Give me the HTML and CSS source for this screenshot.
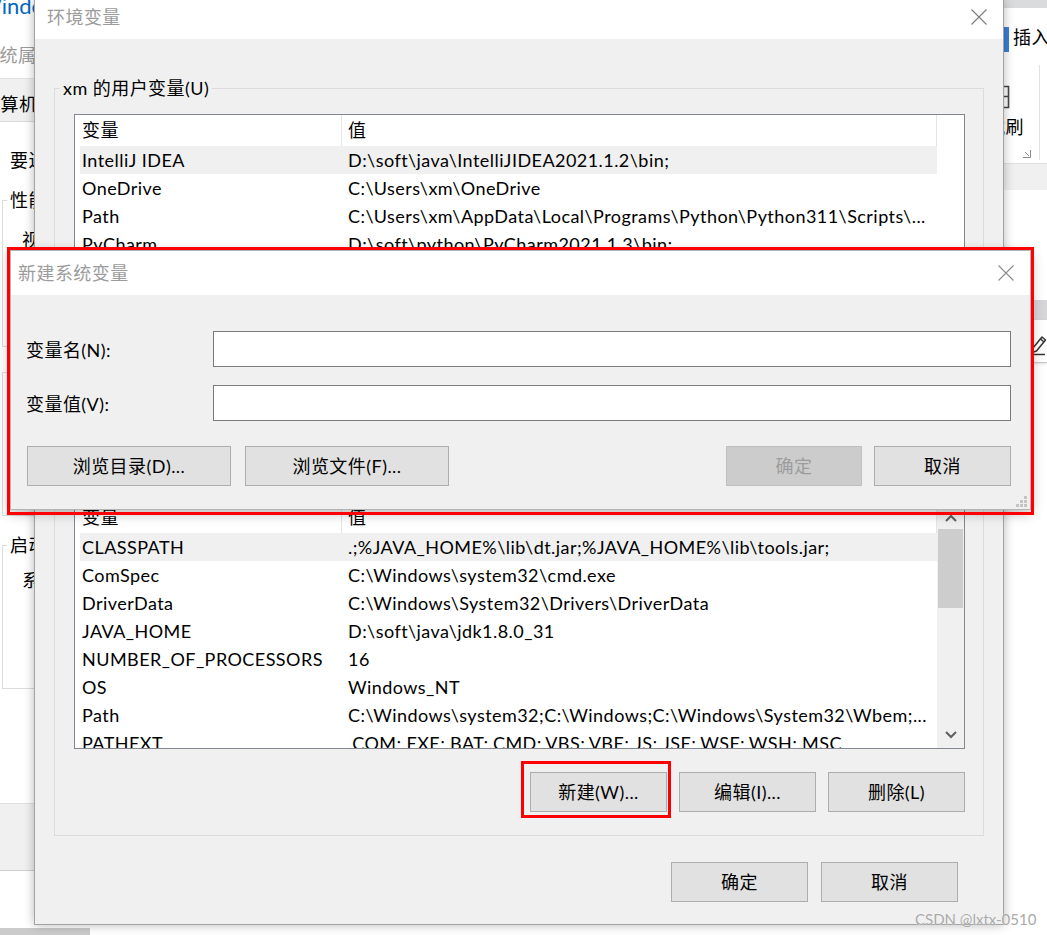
FILE: index.html
```html
<!DOCTYPE html>
<html lang="zh-CN">
<head>
<meta charset="utf-8">
<title>环境变量</title>
<link rel="stylesheet" href="styles.css">
</head>
<body>
<div class="desktop">

  <div class="bgwin-left">
    <div class="bl-app"><span>Windows 设置</span></div>
    <div class="bl-title">系统属性</div>
    <div class="bl-tabs">计算机名</div>
    <div class="bl-note">要进行大多数更改</div>
    <fieldset class="bl-fs bl-perf"><legend>性能</legend><div class="bl-text">视觉效果</div></fieldset>
    <div class="bl-box"></div>
    <fieldset class="bl-fs bl-boot"><legend>启动和故障恢复</legend><div class="bl-text bl-text-boot">系统启动</div></fieldset>
    <div class="bl-footer"></div>
    <div class="bl-taskbar"></div>
  </div>

  <div class="bgwin-right">
    <div class="br-top"></div>
    <div class="br-tabs"><span class="br-tabicon"></span><span class="br-tabtext">插入</span></div>
    <div class="br-ribbon">
      <div class="br-group">
        <svg class="br-brush" width="12" height="24" viewBox="0 0 12 24"><path d="M-4 1.5 H8.5 V11.5 H-4 M-4 11.5 H8.5 V22.5 H-4" fill="none" stroke="#444" stroke-width="1.6"/></svg>
        <div class="br-label">式刷</div>
        <svg class="br-launch" width="8" height="8" viewBox="0 0 8 8"><path d="M7.5 0 V7.5 H0" fill="none" stroke="#8a8a8a" stroke-width="1"/><path d="M2 2 L6 6" stroke="#8a8a8a" stroke-width="1"/></svg>
      </div>
      <div class="br-sep"></div>
    </div>
    <div class="br-band"></div>
    <div class="br-space"></div>
    <div class="br-band2"></div>
    <div class="br-tool">
      <svg class="br-pencil" width="17" height="26" viewBox="0 0 17 26"><path d="M3 18 L12 7 L15.5 10 L6.5 21 L2 22.5 Z" fill="none" stroke="#333" stroke-width="1.5" stroke-linejoin="round"/><path d="M10.5 9 L14 12" stroke="#333" stroke-width="1.5"/><line x1="0" y1="24.5" x2="15" y2="24.5" stroke="#333" stroke-width="1.5"/></svg>
    </div>
  </div>

  <div class="env-dialog">
    <div class="titlebar">
      <span class="title-text">环境变量</span>
      <svg class="close-x" width="16" height="16" viewBox="0 0 16 16"><path d="M0.5 0.5 L15.5 15.5 M15.5 0.5 L0.5 15.5" stroke="#7a7a7a" stroke-width="1.1"/></svg>
    </div>
    <div class="env-body">
      <fieldset class="grp grp-user">
        <legend>xm 的用户变量(U)</legend>
        <div class="grp-inner">
          <div class="list list-user">
            <div class="list-main">
              <div class="list-head"><div class="hc hc1">变量</div><div class="hc hc2">值</div></div>
              <div class="row sel"><div class="c1">IntelliJ IDEA</div><div class="c2">D:\soft\java\IntelliJIDEA2021.1.2\bin;</div></div>
              <div class="row"><div class="c1">OneDrive</div><div class="c2">C:\Users\xm\OneDrive</div></div>
              <div class="row"><div class="c1">Path</div><div class="c2">C:\Users\xm\AppData\Local\Programs\Python\Python311\Scripts\...</div></div>
              <div class="row"><div class="c1">PyCharm</div><div class="c2">D:\soft\python\PyCharm2021.1.3\bin;</div></div>
            </div>
            <div class="list-side"></div>
          </div>
        </div>
      </fieldset>

      <fieldset class="grp grp-sys">
        <legend>系统变量(S)</legend>
        <div class="grp-inner">
          <div class="list list-sys">
            <div class="list-main">
              <div class="list-head"><div class="hc hc1">变量</div><div class="hc hc2">值</div></div>
              <div class="row sel"><div class="c1">CLASSPATH</div><div class="c2">.;%JAVA_HOME%\lib\dt.jar;%JAVA_HOME%\lib\tools.jar;</div></div>
              <div class="row"><div class="c1">ComSpec</div><div class="c2">C:\Windows\system32\cmd.exe</div></div>
              <div class="row"><div class="c1">DriverData</div><div class="c2">C:\Windows\System32\Drivers\DriverData</div></div>
              <div class="row"><div class="c1">JAVA_HOME</div><div class="c2">D:\soft\java\jdk1.8.0_31</div></div>
              <div class="row"><div class="c1">NUMBER_OF_PROCESSORS</div><div class="c2">16</div></div>
              <div class="row"><div class="c1">OS</div><div class="c2">Windows_NT</div></div>
              <div class="row"><div class="c1">Path</div><div class="c2">C:\Windows\system32;C:\Windows;C:\Windows\System32\Wbem;...</div></div>
              <div class="row"><div class="c1">PATHEXT</div><div class="c2">.COM;.EXE;.BAT;.CMD;.VBS;.VBE;.JS;.JSE;.WSF;.WSH;.MSC</div></div>
            </div>
            <div class="vscroll">
              <div class="sb-btn sb-up"><svg width="12" height="8" viewBox="0 0 12 8"><polyline points="1,7 6,2 11,7" fill="none" stroke="#606060" stroke-width="2"/></svg></div>
              <div class="sb-thumb"></div>
              <div class="sb-track"></div>
              <div class="sb-btn sb-down"><svg width="12" height="8" viewBox="0 0 12 8"><polyline points="1,1 6,6 11,1" fill="none" stroke="#606060" stroke-width="2"/></svg></div>
            </div>
          </div>
          <div class="btn-row">
            <button class="btn">新建(W)...</button>
            <button class="btn">编辑(I)...</button>
            <button class="btn">删除(L)</button>
          </div>
        </div>
      </fieldset>

      <div class="btn-row dlg-btns">
        <button class="btn">确定</button>
        <button class="btn">取消</button>
      </div>
    </div>
  </div>

  <div class="nv-dialog">
    <div class="nv-title">
      <span class="title-text">新建系统变量</span>
      <svg class="close-x" width="16" height="16" viewBox="0 0 16 16"><path d="M0.5 0.5 L15.5 15.5 M15.5 0.5 L0.5 15.5" stroke="#8a8a8a" stroke-width="1.1"/></svg>
    </div>
    <div class="nv-body">
      <div class="nv-field"><span class="nv-label">变量名(N):</span><span class="nv-input"></span></div>
      <div class="nv-field"><span class="nv-label">变量值(V):</span><span class="nv-input"></span></div>
      <div class="nv-btns">
        <button class="btn btn-wide">浏览目录(D)...</button>
        <button class="btn btn-wide">浏览文件(F)...</button>
        <span class="nv-spacer"></span>
        <button class="btn btn-disabled">确定</button>
        <button class="btn">取消</button>
      </div>
      <svg class="nv-grip" width="11" height="11" viewBox="0 0 11 11"><g fill="#c4c4c4"><rect x="8" y="0" width="3" height="3"/><rect x="4" y="4" width="3" height="3"/><rect x="8" y="4" width="3" height="3"/><rect x="0" y="8" width="3" height="3"/><rect x="4" y="8" width="3" height="3"/><rect x="8" y="8" width="3" height="3"/></g></svg>
    </div>
  </div>

  <div class="mark mark-dialog"></div>
  <div class="mark mark-btn"></div>
  <div class="watermark">CSDN @lxtx-0510</div>
</div>
</body>
</html>
```

FILE: styles.css
```css
* { box-sizing: border-box; }
html, body { margin: 0; padding: 0; }
body {
  width: 1047px;
  height: 935px;
  overflow: hidden;
  background: #fff;
  font-family: Lato, "Noto Sans CJK SC", sans-serif;
  font-size: 18px;
  letter-spacing: 0.45px;
  color: #000;
}
.desktop { position: relative; width: 1047px; height: 935px; overflow: hidden; background: #fff; }

/* ---------- left background window ---------- */
.bgwin-left {
  position: absolute; left: 0; top: 0;
  width: 90px; height: 935px;
  display: flex; flex-direction: column;
  background: #fff; overflow: hidden;
}
.bl-app, .bl-title, .bl-tabs, .bl-note, .bl-footer { width: 35px; }
.bl-app { height: 33px; flex: none; overflow: hidden; }
.bl-app span {
  display: block; margin: -7px 0 0 -21px;
  font-size: 22px; line-height: 26px; color: #0067c0; white-space: nowrap; letter-spacing: 0;
}
.bl-title { height: 45px; flex: none; line-height: 45px; color: #9a9a9a; white-space: nowrap; text-indent: -19px; overflow: hidden; }
.bl-tabs {
  height: 44px; flex: none; background: #f0f0f0;
  border-top: 1px solid #e3e3e3; border-bottom: 1px solid #d9d9d9;
  padding-top: 13px; line-height: 24px; white-space: nowrap; text-indent: -18px; overflow: hidden;
}
.bl-note { flex: none; margin-top: 26px; padding-left: 10px; line-height: 24px; white-space: nowrap; overflow: hidden; }
.bl-fs { flex: none; margin: 16px 0 0 2px; padding: 0; border: 1px solid #dcdcdc; width: 40px; min-width: 0; overflow: hidden; }
.bl-fs legend { margin-left: 4px; padding: 0 3px; line-height: 24px; white-space: nowrap; max-width: 30px; overflow: hidden; }
.bl-perf { height: 159px; }
.bl-text { padding-left: 19px; margin-top: 16px; line-height: 24px; white-space: nowrap; overflow: hidden; width: 36px; }
.bl-box { flex: none; margin: 25px 0 0 2px; width: 40px; height: 144px; border: 1px solid #dcdcdc; }
.bl-boot { margin-top: 17px; height: 156px; }
.bl-text-boot { margin-top: 11px; }
.bl-footer { flex: none; margin-top: 114px; height: 68px; background: #f0f0f0; border-top: 1px solid #dfdfdf; border-bottom: 1px solid #cfcfcf; }
.bl-taskbar { flex: none; margin-top: 57px; width: 90px; height: 7px; background: #cbcbcb; }

/* ---------- right background window ---------- */
.bgwin-right {
  position: absolute; left: 1000px; top: 0;
  width: 47px; height: 935px;
  display: flex; flex-direction: column; background: #fff; overflow: hidden;
}
.br-top { height: 8px; flex: none; background: #dadbdd; }
.br-tabs { height: 52px; flex: none; display: flex; align-items: flex-start; padding-top: 19px; }
.br-tabicon { width: 6px; height: 25px; margin-left: 3px; background: #3c7fd4; flex: none; }
.br-tabtext { margin-left: 4px; line-height: 20px; white-space: nowrap; }
.br-ribbon { height: 103px; flex: none; display: flex; }
.br-group { width: 39px; flex: none; display: flex; flex-direction: column; overflow: hidden; }
.br-brush { margin-top: 25px; flex: none; }
.br-label { margin-top: 6px; line-height: 24px; white-space: nowrap; text-indent: -13px; }
.br-launch { margin: 11px 0 0 23px; flex: none; }
.br-sep { width: 1px; height: 95px; margin-top: 5px; background: #e1e1e1; }
.br-band { height: 27px; flex: none; background: #f0f0f0; border-top: 1px solid #e1e1e1; }
.br-space { height: 110px; flex: none; }
.br-band2 { height: 20px; flex: none; background: #d6d6d8; }
.br-tool { height: 43px; flex: none; border-bottom: 1px solid #c8c8c8; box-shadow: 0 1px 3px rgba(0,0,0,.12); padding: 10px 0 0 30px; }
.br-pencil { display: block; }

/* ---------- environment variables dialog ---------- */
.env-dialog {
  position: absolute; left: 34px; top: 0;
  width: 970px; height: 925px;
  background: #f0f0f0;
  border: 1px solid #a3a3a3; border-top: 0;
  box-shadow: 0 0 10px rgba(0,0,0,.28);
  display: flex; flex-direction: column;
}
.titlebar {
  height: 39px; flex: none; background: #fff;
  display: flex; justify-content: space-between; align-items: flex-start;
  padding-left: 12px;
}
.title-text { line-height: 35px; color: #9b9b9b; white-space: nowrap; }
.close-x { flex: none; margin: 9px 16px 0 0; }
.env-body { flex: 1; padding: 37px 19px 0; }
.grp { margin: 0; padding: 0; border: 1px solid #dcdcdc; min-width: 0; width: 930px; }
.grp legend { margin-left: 5px; padding: 0 3px; line-height: 24px; white-space: nowrap; }
.grp-inner { padding: 14px 18px 22px 19px; }
.grp-user .grp-inner { padding-bottom: 85px; }
.grp-sys { margin-top: 8px; }
.grp-sys .grp-inner { padding-bottom: 23px; }

.list { display: flex; width: 891px; background: #fff; border: 1px solid #828790; overflow: hidden; }
.list-user { height: 255px; }
.list-sys { height: 248px; }
.list-main { width: 862px; flex: none; display: flex; flex-direction: column; overflow: hidden; }
.list-side { flex: 1; }
.list-head { display: flex; height: 31px; flex: none; line-height: 31px; }
.hc { border-right: 1px solid #e5e5e5; white-space: nowrap; flex: none; }
.hc1 { width: 267px; padding-left: 7px; }
.hc2 { width: 595px; padding-left: 6px; }
.row {
  display: flex; flex: none; height: 28px; line-height: 28px;
  margin-left: 5px; width: 857px; padding-left: 2px; white-space: nowrap;
}
.row.sel { background: #f0f0f0; }
.c1 { width: 266px; flex: none; overflow: hidden; }
.c2 { flex: 1; overflow: hidden; }

.vscroll { flex: 1; background: #f0f0f0; display: flex; flex-direction: column; }
.sb-btn { height: 27px; flex: none; display: flex; align-items: center; justify-content: center; }
.sb-up { padding-top: 4px; }
.sb-thumb { height: 79px; flex: none; margin: 0 1px; background: #cdcdcd; }
.sb-track { flex: 1; }

.btn-row { display: flex; justify-content: flex-end; gap: 12px; margin-top: 23px; }
.btn {
  width: 137px; height: 40px; flex: none;
  background: #e1e1e1; border: 1px solid #adadad; border-radius: 0;
  font: inherit; letter-spacing: inherit; line-height: 38px; text-align: center; padding: 0; color: #000;
  white-space: nowrap;
}
.dlg-btns { gap: 13px; margin-top: 26px; padding-right: 26px; }

/* ---------- new system variable dialog ---------- */
.nv-dialog {
  position: absolute; left: 10px; top: 250px;
  width: 1021px; height: 260px;
  background: #f0f0f0; border: 1px solid #b4b4b4;
  box-shadow: 0 3px 12px rgba(0,0,0,.3);
  display: flex; flex-direction: column;
}
.nv-title {
  height: 44px; flex: none; background: #fff;
  display: flex; justify-content: space-between; align-items: flex-start;
  padding-left: 7px;
}
.nv-title .title-text { line-height: 44px; }
.nv-title .close-x { margin: 14px 16px 0 0; }
.nv-body { flex: 1; padding: 36px 19px 0 15px; position: relative; }
.nv-field { display: flex; align-items: center; height: 36px; }
.nv-field + .nv-field { margin-top: 18px; }
.nv-label { width: 187px; flex: none; white-space: nowrap; }
.nv-input { flex: 1; height: 36px; border: 1px solid #7a7a7a; background: #fff; }
.nv-btns { display: flex; margin-top: 25px; margin-left: 1px; }
.btn-wide { width: 204px; }
.nv-btns .btn-wide + .btn-wide { margin-left: 14px; }
.nv-spacer { flex: 1; }
.nv-btns .btn-disabled + .btn { margin-left: 12px; }
.btn-disabled { width: 136px; background: #cccccc; border-color: #bfbfbf; color: #9c9c9c; }
.nv-grip { position: absolute; right: 3px; bottom: 2px; }

/* ---------- annotations ---------- */
.mark { position: absolute; border: 3px solid #f00; pointer-events: none; }
.mark-dialog { left: 7px; top: 247px; width: 1027px; height: 268px; }
.mark-btn { left: 521px; top: 761px; width: 150px; height: 57px; }
.watermark {
  position: absolute; left: 915px; top: 909px;
  font-size: 15px; line-height: 20px; color: #a9a9a9; letter-spacing: 0;
  text-shadow: 0 0 1px #fff; white-space: nowrap;
}
```
